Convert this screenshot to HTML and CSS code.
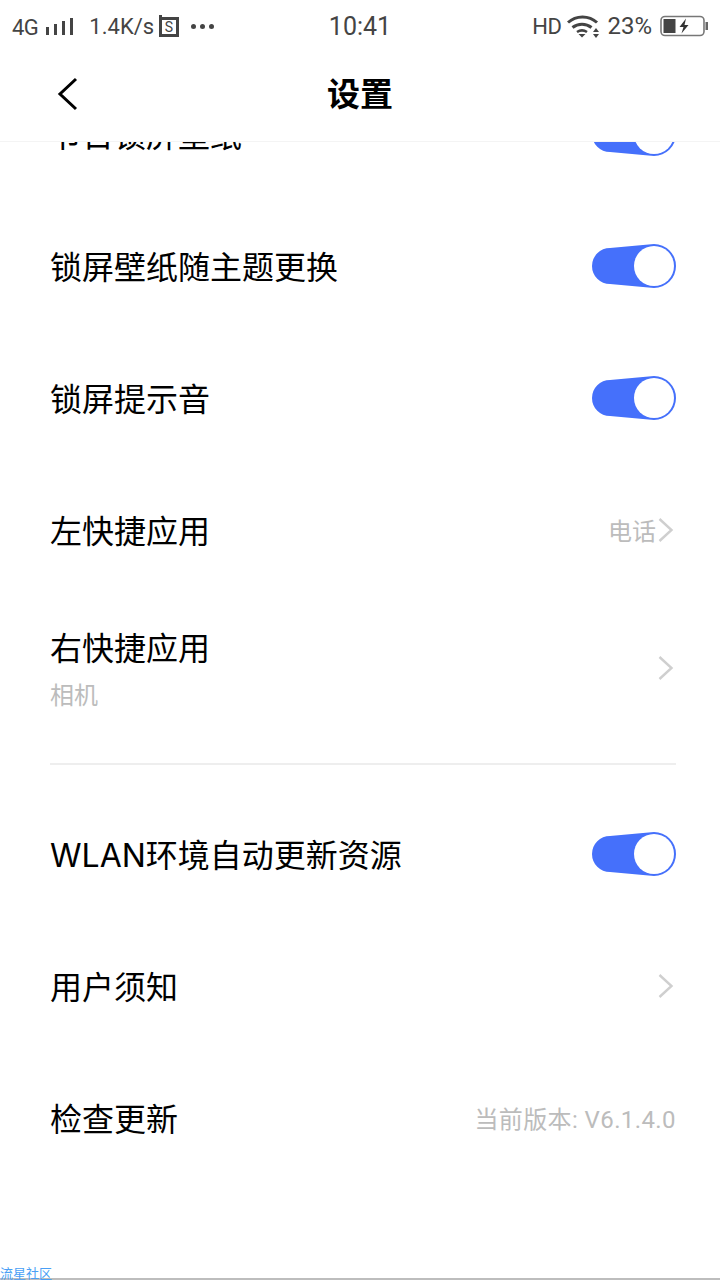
FILE: index.html
```html
<!DOCTYPE html>
<html lang="zh-CN">
<head>
    <meta charset="UTF-8">
    <meta name="viewport" content="width=device-width, initial-scale=1.0">
    <title>设置</title>
    <link rel="stylesheet" href="styles.css">
</head>
<body>
    <svg class="defs" width="0" height="0">
        <symbol id="toggle" viewBox="0 0 84 44">
            <path d="M18 4L62 0A22 22 0 0 1 62 44L18 40A18 18 0 0 1 18 4Z" fill="#4570fb"/>
            <circle cx="62" cy="22" r="20" fill="#fff"/>
        </symbol>
        <symbol id="chevron" viewBox="0 0 16 24">
            <path d="M1.500 1L13.500 12L1.500 23" fill="none" stroke="#cfcfcf" stroke-width="2.400"/>
        </symbol>
    </svg>

    <div class="page">
        <header class="top">
            <div class="status">
                <div class="status-left">
                    <span class="net">4G</span>
                    <span class="signal"><i></i><i></i><i></i><i></i></span>
                    <span class="speed">1.4K/s</span>
                    <svg class="s-icon" width="20" height="22" viewBox="0 0 20 22">
                        <path d="M1.500 3.500H18.500V20.500H1.500Z" fill="none" stroke="#444" stroke-width="3"/>
                        <rect x="0" y="0" width="3" height="4" fill="#444"/>
                        <text x="10" y="17" text-anchor="middle" class="s-letter">S</text>
                    </svg>
                    <span class="dots"><i></i><i></i><i></i></span>
                </div>
                <div class="time">10:41</div>
                <div class="status-right">
                    <span class="hd">HD</span>
                    <svg class="wifi" width="32" height="24" viewBox="0 0 32 24">
                        <path d="M1 8.500C9 1 22 1 30 8.500" fill="none" stroke="#444" stroke-width="3"/>
                        <path d="M5.500 13.500C11 9 19 9 24.500 13.500" fill="none" stroke="#444" stroke-width="3"/>
                        <path d="M10 18C13 16 17 16 20 18" fill="none" stroke="#444" stroke-width="2.600"/>
                        <path d="M11.500 20H18.500L15 23.500Z" fill="#444"/>
                        <path d="M29 14L32 18H26ZM26 20H32L29 24Z" fill="#444"/>
                    </svg>
                    <span class="battery-pct">23%</span>
                    <svg class="battery" width="48" height="22" viewBox="0 0 48 22">
                        <rect x="1" y="1.500" width="43" height="19" rx="4" fill="none" stroke="#777" stroke-width="1.600"/>
                        <rect x="3.500" y="4" width="12" height="14" fill="#444"/>
                        <rect x="45.500" y="7" width="2.500" height="8" fill="#666"/>
                        <path d="M26 3.500L19.500 12H23.500L21.500 18.500L28.500 10H24.500Z" fill="#333"/>
                    </svg>
                </div>
            </div>
            <div class="nav">
                <svg class="back" width="22" height="34" viewBox="0 0 22 34">
                    <path d="M19 2L3 17L19 32" fill="none" stroke="#000" stroke-width="3"/>
                </svg>
                <h1>设置</h1>
            </div>
        </header>

        <main class="list">
            <div class="row"><span class="label">节日锁屏壁纸</span><svg class="toggle"><use href="#toggle"/></svg></div>
            <div class="row"><span class="label">锁屏壁纸随主题更换</span><svg class="toggle"><use href="#toggle"/></svg></div>
            <div class="row"><span class="label">锁屏提示音</span><svg class="toggle"><use href="#toggle"/></svg></div>
            <div class="row">
                <span class="label">左快捷应用</span>
                <span class="side"><span class="value">电话</span><svg class="chevron"><use href="#chevron"/></svg></span>
            </div>
            <div class="row row-tall">
                <div class="two-line">
                    <span class="label">右快捷应用</span>
                    <span class="sub">相机</span>
                </div>
                <svg class="chevron"><use href="#chevron"/></svg>
            </div>
            <div class="divider"></div>
            <div class="row"><span class="label">WLAN环境自动更新资源</span><svg class="toggle"><use href="#toggle"/></svg></div>
            <div class="row"><span class="label">用户须知</span><svg class="chevron"><use href="#chevron"/></svg></div>
            <div class="row"><span class="label">检查更新</span><span class="value version">当前版本: V6.1.4.0</span></div>
        </main>

        <footer class="mark"><span>流星社区</span></footer>
    </div>
</body>
</html>
```

FILE: styles.css
```css
* { box-sizing: border-box; }
body { margin: 0; background: #fff; color: #000; font-family: Roboto, "Noto Sans CJK SC", sans-serif; }
.defs { position: absolute; }
.page { width: 720px; height: 1280px; display: flex; flex-direction: column; overflow: hidden; }

/* 顶部 */
.top { position: relative; z-index: 1; height: 142px; flex: none; background: #fff; border-bottom: 1px solid #f4f4f4; }
.status { height: 52px; display: grid; grid-template-columns: 1fr auto 1fr; align-items: center; padding: 0 12px; color: #444; }
.status-left, .status-right { display: flex; align-items: center; }
.status-right { justify-content: flex-end; }
.net { font-size: 22px; letter-spacing: -0.5px; margin-top: 3px; }
.signal { display: flex; align-items: flex-end; gap: 5px; height: 18px; margin: 0 0 0 8px; }
.signal i { width: 3px; background: #444; }
.signal i:nth-child(1) { height: 8px; }
.signal i:nth-child(2) { height: 11px; }
.signal i:nth-child(3) { height: 14px; }
.signal i:nth-child(4) { height: 17px; }
.speed { font-size: 22px; margin-left: 16px; }
.s-icon { margin-left: 5px; }
.s-letter { font-size: 14px; fill: #444; font-family: Roboto, sans-serif; }
.dots { display: flex; gap: 4px; margin-left: 12px; }
.dots i { width: 5px; height: 5px; border-radius: 50%; background: #444; }
.time { font-size: 25px; }
.hd { font-size: 22px; letter-spacing: -0.5px; }
.wifi { margin-left: 6px; }
.battery-pct { font-size: 24px; margin-left: 8px; }
.battery { margin-left: 8px; }

.nav { height: 89px; display: flex; align-items: center; justify-content: center; position: relative; padding-bottom: 10px; }
.nav h1 { margin: 0; font-size: 33px; font-weight: 700; }
.back { position: absolute; left: 57px; top: 25px; }

/* 列表，已向上滚动一段 */
.list { margin-top: -74px; padding: 0 44px 0 50px; }
.row { height: 132px; display: flex; align-items: center; justify-content: space-between; }
.row-tall { height: 144px; }
.label { font-family: Inter, "Noto Sans CJK SC", sans-serif; font-size: 32px; line-height: 44px; padding-top: 4px; }
.two-line { display: flex; flex-direction: column; }
.sub { font-size: 24px; line-height: 34px; color: #bcbcbc; margin-top: 8px; }
.side { display: flex; align-items: center; }
.value { font-size: 24px; color: #bcbcbc; margin-bottom: 2px; }
.side .value { margin-right: 2px; }
.version { letter-spacing: 0.4px; }
.toggle { width: 84px; height: 44px; }
.chevron { width: 16px; height: 24px; margin-right: 2px; }
.divider { height: 2px; margin: 23px 0 23px; background: #eeeeee; }

/* 水印 */
.mark { margin-top: auto; height: 13px; border-bottom: 2px solid #bdbdbd; font-size: 13px; line-height: 13px; color: #4a9ff5; }
```
